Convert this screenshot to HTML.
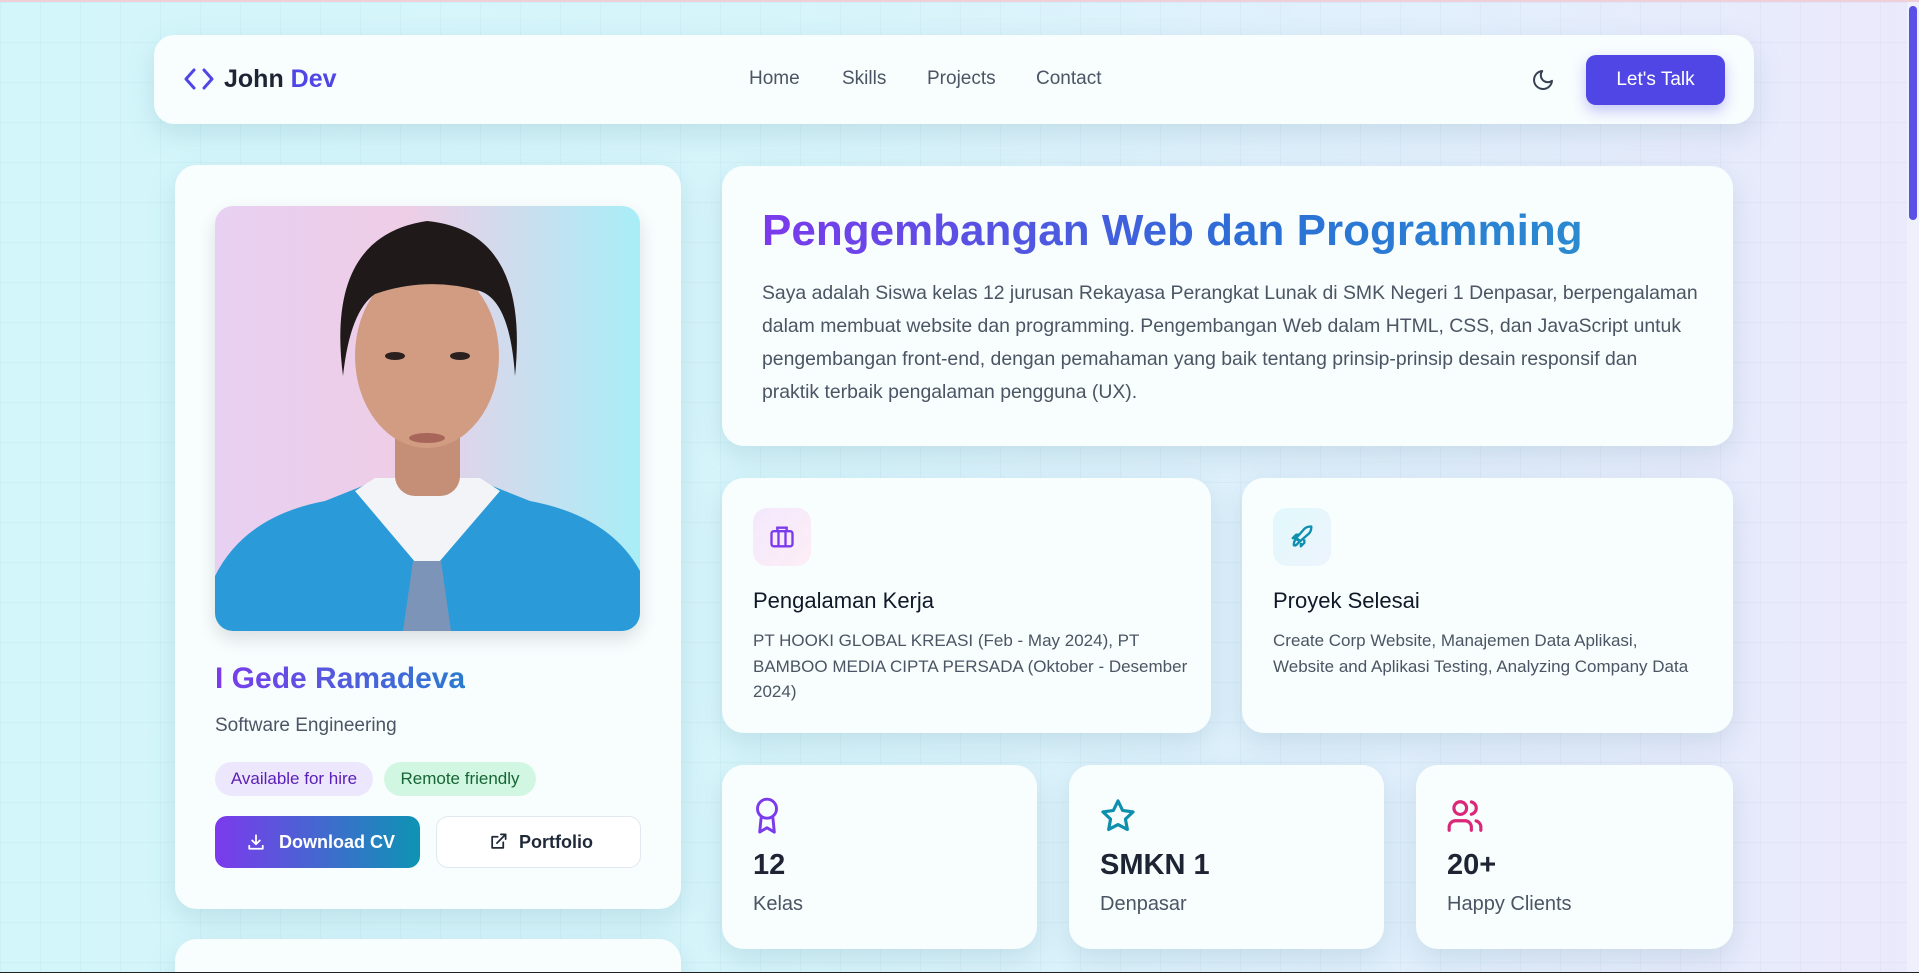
<!DOCTYPE html>
<html><head><meta charset="utf-8"><style>
*{box-sizing:border-box;margin:0;padding:0}
html,body{width:1919px;height:973px;overflow:hidden}
body{font-family:"Liberation Sans",sans-serif;position:relative;
background:linear-gradient(90deg,#d3f6fb 0%,#d6f5fb 40%,#e2effc 75%,#ebe9fc 100%);border-top:2px solid #f0d0d8}
body:before{content:"";position:absolute;inset:0;background-image:linear-gradient(rgba(120,160,180,.07) 1px,transparent 1px),linear-gradient(90deg,rgba(120,160,180,.07) 1px,transparent 1px);background-size:40px 40px}
.card{position:absolute;background:#f8fdfe;border-radius:22px;box-shadow:0 10px 28px rgba(80,130,150,.18)}
.nav{left:154px;top:33px;width:1600px;height:89px;border-radius:20px}
.abs{position:absolute}
.g{background-image:linear-gradient(90deg,#7c3aed,#2b7bcf);-webkit-background-clip:text;background-clip:text;color:transparent;-webkit-text-fill-color:transparent}
.ico{position:absolute;width:58px;height:58px;border-radius:14px}
.t{position:absolute;white-space:nowrap}
</style></head><body>
<div class="card nav">
 <svg class="abs" style="left:30px;top:33px" width="30" height="22" viewBox="0 0 30 22"><path d="M10 2 2 11l8 9M20 2l8 9-8 9" fill="none" stroke="#4f46e5" stroke-width="3" stroke-linecap="round" stroke-linejoin="round"/></svg>
 <div class="t" style="left:70px;top:30px;font-size:25px;font-weight:700;color:#1e2433">John <span style="color:#4f46e5">Dev</span></div>
 <div class="t" style="left:595px;top:33px;font-size:19px;color:#4b5563">Home</div>
 <div class="t" style="left:688px;top:33px;font-size:19px;color:#4b5563">Skills</div>
 <div class="t" style="left:773px;top:33px;font-size:19px;color:#4b5563">Projects</div>
 <div class="t" style="left:882px;top:33px;font-size:19px;color:#4b5563">Contact</div>
 <svg class="abs" style="left:1377px;top:33px" width="24" height="24" viewBox="0 0 24 24"><path d="M21 12.8A9 9 0 1 1 11.2 3a7 7 0 0 0 9.8 9.8z" fill="none" stroke="#374151" stroke-width="2" stroke-linejoin="round"/></svg>
 <div class="abs" style="left:1432px;top:20px;width:139px;height:50px;border-radius:10px;background:#4f46e5;color:#fff;font-size:19px;text-align:center;line-height:50px;box-shadow:0 6px 14px rgba(79,70,229,.3)">Let's Talk</div>
</div>

<div class="card" style="left:175px;top:163px;width:506px;height:744px">
 <div class="abs" style="left:40px;top:41px;width:425px;height:425px;border-radius:18px;overflow:hidden;background:linear-gradient(90deg,#e8d0f2,#eecde6 45%,#a8eef7 100%);box-shadow:0 8px 18px rgba(0,0,0,.12)">
  <svg width="425" height="425" viewBox="0 0 425 425">
   <path d="M0 425 L0 370 Q30 310 110 295 L160 275 L265 275 L315 295 Q395 310 425 365 L425 425Z" fill="#2a9bd8"/>
   <path d="M140 285 L212 370 L285 285 L265 272 L160 272Z" fill="#f2f4f7"/>
   <path d="M198 355 L226 355 L236 425 L188 425Z" fill="#7c94b8"/>
   <rect x="180" y="210" width="65" height="80" rx="20" fill="#c48f76"/>
   <ellipse cx="212" cy="150" rx="72" ry="92" fill="#d29c82"/>
   <path d="M128 170 Q110 30 212 15 Q315 25 300 170 Q295 95 265 85 Q212 70 160 88 Q135 105 128 170Z" fill="#1f1a19"/>
   <ellipse cx="180" cy="150" rx="10" ry="4" fill="#2a201e"/><ellipse cx="245" cy="150" rx="10" ry="4" fill="#2a201e"/>
   <ellipse cx="212" cy="232" rx="18" ry="5" fill="#a8665a"/>
  </svg>
 </div>
 <div class="t g" style="left:40px;top:497px;font-size:30px;font-weight:700">I Gede Ramadeva</div>
 <div class="t" style="left:40px;top:550px;font-size:19px;color:#4b5563">Software Engineering</div>
 <div class="abs" style="left:40px;top:597px;width:158px;height:34px;border-radius:17px;background:#ede7fd;color:#5b21b6;font-size:17px;line-height:34px;text-align:center">Available for hire</div>
 <div class="abs" style="left:209px;top:597px;width:152px;height:34px;border-radius:17px;background:#d1f7e2;color:#166534;font-size:17px;line-height:34px;text-align:center">Remote friendly</div>
 <div class="abs" style="left:40px;top:651px;width:205px;height:52px;border-radius:12px;background:linear-gradient(90deg,#7c3aed,#0d94b3);color:#fff;font-size:18px;font-weight:700;line-height:52px;padding-left:64px">
  <svg class="abs" style="left:32px;top:17px" width="18" height="18" viewBox="0 0 24 24"><path d="M12 3v12m-5-5 5 5 5-5M3 17v4h18v-4" fill="none" stroke="#fff" stroke-width="2.4" stroke-linecap="round" stroke-linejoin="round"/></svg>Download CV</div>
 <div class="abs" style="left:261px;top:651px;width:205px;height:52px;border-radius:12px;border:1px solid #e2e8f0;background:#fff;color:#1f2937;font-size:18px;font-weight:700;line-height:50px;padding-left:82px">
  <svg class="abs" style="left:52px;top:15px" width="19" height="19" viewBox="0 0 24 24"><path d="M18 13v7H4V6h7M15 3h6v6M10 14 21 3" fill="none" stroke="#1f2937" stroke-width="2.2" stroke-linecap="round" stroke-linejoin="round"/></svg>Portfolio</div>
</div>
<div class="card" style="left:175px;top:937px;width:506px;height:80px"></div>

<div class="card" style="left:722px;top:164px;width:1011px;height:280px">
 <div class="t g" style="left:40px;top:40px;font-size:44px;font-weight:700;background-image:linear-gradient(90deg,#7c3aed,#2b6fd6 60%,#2b8ad0)">Pengembangan Web dan Programming</div>
 <div class="abs" style="left:40px;top:111px;width:945px;font-size:19.4px;line-height:33px;color:#4b5563">Saya adalah Siswa kelas 12 jurusan Rekayasa Perangkat Lunak di SMK Negeri 1 Denpasar, berpengalaman dalam membuat website dan programming. Pengembangan Web dalam HTML, CSS, dan JavaScript untuk pengembangan front-end, dengan pemahaman yang baik tentang prinsip-prinsip desain responsif dan<br>praktik terbaik pengalaman pengguna (UX).</div>
</div>

<div class="card" style="left:722px;top:476px;width:489px;height:255px">
 <div class="ico" style="left:31px;top:30px;background:linear-gradient(135deg,#f3e8fd,#fdeef5)">
  <svg class="abs" style="left:15px;top:15px" width="28" height="28" viewBox="0 0 24 24"><rect x="3" y="7" width="18" height="13" rx="2" fill="none" stroke="#7c3aed" stroke-width="2"/><path d="M8 7V4h8v3M9 7v13M15 7v13" fill="none" stroke="#7c3aed" stroke-width="2"/></svg></div>
 <div class="t" style="left:31px;top:110px;font-size:22px;color:#111827">Pengalaman Kerja</div>
 <div class="abs" style="left:31px;top:150px;width:440px;font-size:17px;line-height:25.5px;color:#4b5563">PT HOOKI GLOBAL KREASI (Feb - May 2024), PT BAMBOO MEDIA CIPTA PERSADA (Oktober - Desember 2024)</div>
</div>
<div class="card" style="left:1242px;top:476px;width:491px;height:255px">
 <div class="ico" style="left:31px;top:30px;background:linear-gradient(135deg,#e0f9fc,#eef4fd)">
  <svg class="abs" style="left:15px;top:15px" width="28" height="28" viewBox="0 0 24 24"><path d="M5 19c0-3 1-5 3-5s2 2 0 4-3 1-3 1zM9 15l-2-2 7-8c2-2 5-2 6-2 0 1 0 4-2 6l-8 7zM7 13H4l3-3h3M11 17v3l3-3v-3" fill="none" stroke="#0e8fae" stroke-width="2" stroke-linejoin="round"/></svg></div>
 <div class="t" style="left:31px;top:110px;font-size:22px;color:#111827">Proyek Selesai</div>
 <div class="abs" style="left:31px;top:150px;width:428px;font-size:17px;line-height:25.5px;color:#4b5563">Create Corp Website, Manajemen Data Aplikasi, Website and Aplikasi Testing, Analyzing Company Data</div>
</div>

<div class="card" style="left:722px;top:763px;width:315px;height:184px">
 <svg class="abs" style="left:30px;top:32px" width="30" height="38" viewBox="0 0 20 26"><circle cx="10" cy="8" r="6.5" fill="none" stroke="#7c3aed" stroke-width="2"/><path d="M6 14 5 24l5-3 5 3-1-10" fill="none" stroke="#7c3aed" stroke-width="2" stroke-linejoin="round"/></svg>
 <div class="t" style="left:31px;top:84px;font-size:29px;font-weight:700;color:#1e2433">12</div>
 <div class="t" style="left:31px;top:128px;font-size:20px;color:#4b5563">Kelas</div>
</div>
<div class="card" style="left:1069px;top:763px;width:315px;height:184px">
 <svg class="abs" style="left:30px;top:32px" width="38" height="38" viewBox="0 0 24 24"><path d="M12 2.5l2.9 6 6.6.9-4.8 4.6 1.2 6.5L12 17.4l-5.9 3.1 1.2-6.5L2.5 9.4l6.6-.9z" fill="none" stroke="#0e8fae" stroke-width="2" stroke-linejoin="round"/></svg>
 <div class="t" style="left:31px;top:84px;font-size:29px;font-weight:700;color:#1e2433">SMKN 1</div>
 <div class="t" style="left:31px;top:128px;font-size:20px;color:#4b5563">Denpasar</div>
</div>
<div class="card" style="left:1416px;top:763px;width:317px;height:184px">
 <svg class="abs" style="left:30px;top:32px" width="38" height="38" viewBox="0 0 24 24"><circle cx="9" cy="7" r="4" fill="none" stroke="#db2777" stroke-width="2"/><path d="M2 21v-2a4 4 0 0 1 4-4h6a4 4 0 0 1 4 4v2M16 3.1a4 4 0 0 1 0 7.8M22 21v-2a4 4 0 0 0-3-3.9" fill="none" stroke="#db2777" stroke-width="2" stroke-linecap="round"/></svg>
 <div class="t" style="left:31px;top:84px;font-size:29px;font-weight:700;color:#1e2433">20+</div>
 <div class="t" style="left:31px;top:128px;font-size:20px;color:#4b5563">Happy Clients</div>
</div>

<div class="abs" style="left:1907px;top:0;width:12px;height:973px;background:#eef0fb"></div>
<div class="abs" style="left:1909px;top:4px;width:8px;height:214px;border-radius:4px;background:#5a4fe6"></div>
<div class="abs" style="left:0;top:970px;width:1919px;height:3px;background:#222"></div>
</body></html>
